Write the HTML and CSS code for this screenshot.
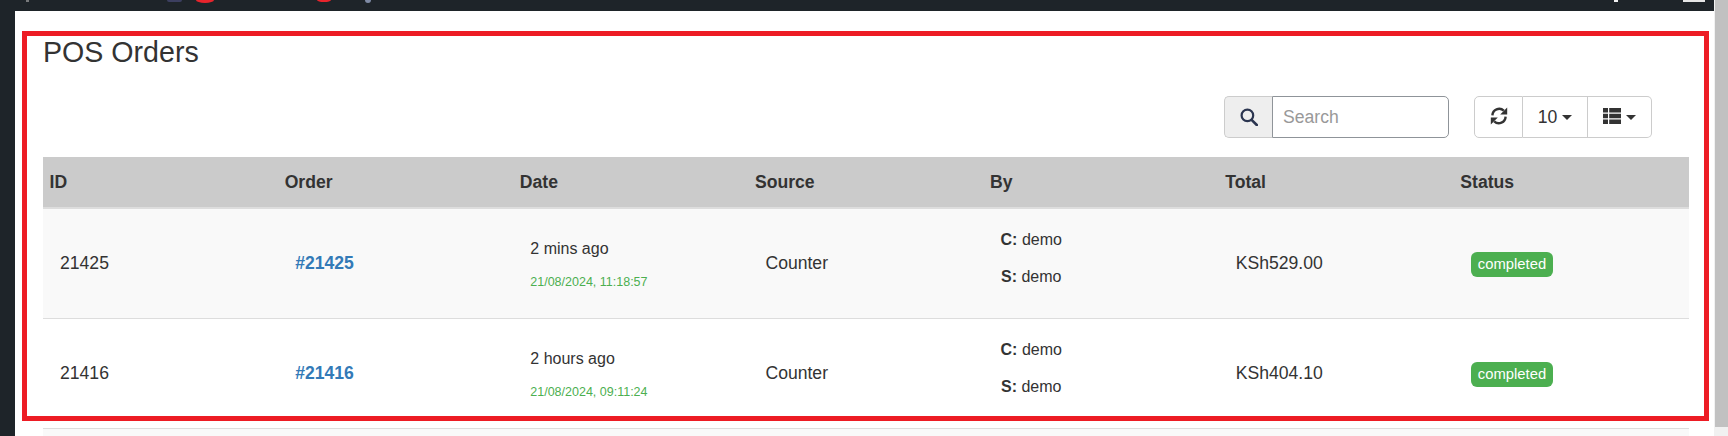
FILE: index.html
```html
<!DOCTYPE html>
<html lang="en">
<head>
    <meta charset="UTF-8">
    <meta name="viewport" content="width=device-width, initial-scale=1.0">
    <title>POS Orders</title>
    <link rel="stylesheet" href="styles.css">
</head>
<body>

    <div id="app">
        <!-- only the bottom edge of the nav icons is in view -->
        <header id="topBar">
            <span class="navBit navBitGrey"></span>
            <span class="navBit navBitPurple"></span>
            <span class="navBit navBitRed"></span>
            <span class="navBit navBitRedSmall"></span>
            <span class="navBit navBitArrow"></span>
            <span class="navBit navBitWhite"></span>
            <span class="navBit navBitBox"></span>
        </header>

        <div id="mainRow">
            <div id="sideBar"></div>

            <main id="content">
                <h1 id="pageTitle">POS Orders</h1>

                <div id="toolbar">
                    <div class="searchGroup">
                        <span class="searchAddon">
                            <svg class="icon" width="18" height="18" viewBox="0 0 18 18">
                                <circle cx="7.4" cy="7.4" r="5.8" fill="none" stroke="#2b3550" stroke-width="2.2"/>
                                <path d="M11.6 11.8 L16.8 17" stroke="#2b3550" stroke-width="2.6" stroke-linecap="round"/>
                            </svg>
                        </span>
                        <input class="searchInput" type="text" placeholder="Search">
                    </div>

                    <div class="btnGroup">
                        <button class="tblBtn btnRefresh">
                            <svg class="icon iconUp" width="18" height="18" viewBox="0 0 18 18">
                                <path d="M2.4 8.4 A6.8 6.8 0 0 1 13.8 3.6" fill="none" stroke="#333" stroke-width="2.4"/>
                                <path d="M17.2 0.4 V7.4 H10.2 Z" fill="#333"/>
                                <path d="M15.6 9.6 A6.8 6.8 0 0 1 4.2 14.4" fill="none" stroke="#333" stroke-width="2.4"/>
                                <path d="M0.8 17.6 V10.6 H7.8 Z" fill="#333"/>
                            </svg>
                        </button>
                        <button class="tblBtn btnPageSize">10<span class="caret"></span></button>
                        <button class="tblBtn btnColumns">
                            <svg class="icon iconUp" width="18" height="16" viewBox="0 0 18 16">
                                <path d="M0 0 H5 V4.6 H0 Z M6.2 0 H18 V4.6 H6.2 Z M0 5.7 H5 V10.3 H0 Z M6.2 5.7 H18 V10.3 H6.2 Z M0 11.4 H5 V16 H0 Z M6.2 11.4 H18 V16 H6.2 Z" fill="#333"/>
                            </svg>
                            <span class="caret"></span>
                        </button>
                    </div>
                </div>

                <table id="ordersTable">
                    <thead>
                        <tr>
                            <th>ID</th>
                            <th>Order</th>
                            <th>Date</th>
                            <th>Source</th>
                            <th>By</th>
                            <th>Total</th>
                            <th>Status</th>
                        </tr>
                    </thead>
                    <tbody>
                        <tr class="rowOdd">
                            <td>21425</td>
                            <td><a class="orderLink" href="#">#21425</a></td>
                            <td>
                                <p class="dateAgo">2 mins ago</p>
                                <p class="dateFull">21/08/2024, 11:18:57</p>
                            </td>
                            <td>Counter</td>
                            <td>
                                <div class="byBox">
                                    <p><b>C:</b> demo</p>
                                    <p><b>S:</b> demo</p>
                                </div>
                            </td>
                            <td>KSh529.00</td>
                            <td><span class="badge">completed</span></td>
                        </tr>
                        <tr>
                            <td>21416</td>
                            <td><a class="orderLink" href="#">#21416</a></td>
                            <td>
                                <p class="dateAgo">2 hours ago</p>
                                <p class="dateFull">21/08/2024, 09:11:24</p>
                            </td>
                            <td>Counter</td>
                            <td>
                                <div class="byBox">
                                    <p><b>C:</b> demo</p>
                                    <p><b>S:</b> demo</p>
                                </div>
                            </td>
                            <td>KSh404.10</td>
                            <td><span class="badge">completed</span></td>
                        </tr>
                        <tr class="rowOdd">
                            <td colspan="7"></td>
                        </tr>
                    </tbody>
                </table>
            </main>
        </div>
    </div>

    <div id="scrollBar"><div id="scrollThumb"></div></div>

    <!-- red marker drawn on top of the page -->
    <div id="redFrame"></div>

</body>
</html>
```

FILE: styles.css
```css
*{
    box-sizing: border-box;
}

html, body{
    margin: 0;
    height: 436px;
    overflow: hidden;
}

body{
    display: flex;
    font-family: "Liberation Sans", Arial, sans-serif;
    color: #333;
    background-color: #fff;
    position: relative;
}

#app{
    flex: 1;
    display: flex;
    flex-direction: column;
    min-width: 0;
}

#topBar{
    height: 11px;
    background-color: #1e2429;
    display: flex;
    align-items: flex-start;
    flex-shrink: 0;
}

.navBit{
    display: block;
}
.navBitGrey{
    width: 3px;
    height: 2px;
    margin-left: 26px;
    background-color: #77797b;
}
.navBitPurple{
    width: 15px;
    height: 2px;
    margin-left: 138px;
    background-color: #3c3f60;
    border-radius: 0 0 6px 6px;
}
.navBitRed{
    width: 18px;
    height: 3px;
    margin-left: 14px;
    background-color: #e8242c;
    border-radius: 0 0 50% 50% / 0 0 100% 100%;
}
.navBitRedSmall{
    width: 14px;
    height: 2px;
    margin-left: 103px;
    background-color: #e8242c;
    border-radius: 0 0 50% 50% / 0 0 100% 100%;
}
.navBitArrow{
    width: 6px;
    height: 3px;
    margin-left: 34px;
    background-color: #7f8ba5;
    border-radius: 0 0 3px 3px;
}
.navBitWhite{
    width: 4px;
    height: 2px;
    margin-left: 1243px;
    background-color: #f2f2f2;
}
.navBitBox{
    width: 22px;
    height: 2px;
    margin-left: 65px;
    background-color: #e6e6e6;
}

#mainRow{
    flex: 1;
    display: flex;
    min-height: 0;
}

#sideBar{
    width: 15px;
    background-color: #1e2429;
    flex-shrink: 0;
}

#content{
    flex: 1;
    min-width: 0;
    padding: 0 25px 0 28px;
    overflow: hidden;
}

#pageTitle{
    font-size: 28.6px;
    font-weight: 400;
    line-height: 32px;
    margin: 25px 0 0 0;
}

#toolbar{
    display: flex;
    justify-content: flex-end;
    gap: 25px;
    height: 42px;
    margin-top: 28px;
    padding-right: 37px;
}

.searchGroup{
    display: flex;
    width: 225px;
}

.searchAddon{
    width: 48px;
    display: flex;
    align-items: center;
    justify-content: center;
    background-color: #eee;
    border: 1px solid #ccc;
    border-right: 0;
    border-radius: 5px 0 0 5px;
}

.searchInput{
    flex: 1;
    min-width: 0;
    font-family: inherit;
    font-size: 17.6px;
    color: #555;
    padding: 0 10px;
    border: 1px solid #8f9499;
    border-radius: 0 5px 5px 0;
    outline: none;
}
.searchInput::placeholder{
    color: #999;
}

.btnGroup{
    display: flex;
}

.tblBtn{
    display: flex;
    align-items: center;
    justify-content: center;
    height: 100%;
    padding: 0;
    font-family: inherit;
    font-size: 17.6px;
    color: #333;
    background-color: #fff;
    border: 1px solid #ccc;
    border-left: 0;
}
.btnRefresh{
    width: 49px;
    border-left: 1px solid #ccc;
    border-radius: 5px 0 0 5px;
}
.btnPageSize{
    width: 65px;
}
.btnColumns{
    width: 64px;
    border-radius: 0 5px 5px 0;
}

.icon{
    display: block;
}
.iconUp{
    margin-bottom: 2px;
}

.caret{
    width: 0;
    height: 0;
    margin-left: 5px;
    border-top: 5px solid #333;
    border-left: 5px solid transparent;
    border-right: 5px solid transparent;
}

#ordersTable{
    width: 100%;
    margin-top: 19px;
    border-collapse: collapse;
    table-layout: fixed;
}

#ordersTable th{
    height: 51px;
    padding: 0 6px 0 6.5px;
    background-color: #cbcbcb;
    border-bottom: 2px solid #ddd;
    font-size: 17.6px;
    line-height: 20px;
    font-weight: 700;
    text-align: left;
}

#ordersTable td{
    height: 110px;
    padding: 0 17px;
    border-bottom: 1px solid #ddd;
    font-size: 17.6px;
    vertical-align: middle;
}

.rowOdd td{
    background-color: #f9f9f9;
}

.orderLink{
    color: #337ab7;
    font-weight: 700;
    text-decoration: none;
}

.dateAgo{
    margin: 0;
    font-size: 16px;
    line-height: 20px;
    padding-top: 5px;
}
.dateFull{
    margin: 13px 0 0 0;
    font-size: 12.5px;
    line-height: 20px;
    color: #4caf50;
}

.byBox{
    width: fit-content;
    text-align: center;
    font-size: 16px;
    line-height: 20px;
    margin-bottom: 10px;
}
.byBox p{
    margin: 0;
}
.byBox p + p{
    margin-top: 17px;
}

.badge{
    display: inline-block;
    height: 25px;
    line-height: 25px;
    padding: 0 7px;
    margin-top: 3px;
    background-color: #4caf50;
    color: #fff;
    font-size: 14.8px;
    border-radius: 6px;
}

#scrollBar{
    width: 14px;
    background-color: #f1f1f1;
    flex-shrink: 0;
    padding-left: 1px;
}
#scrollThumb{
    height: 427px;
    background-color: #c1c1c1;
}

#redFrame{
    position: absolute;
    left: 22px;
    top: 31px;
    width: 1687px;
    height: 390px;
    border: 5px solid #ed1c24;
}
```
